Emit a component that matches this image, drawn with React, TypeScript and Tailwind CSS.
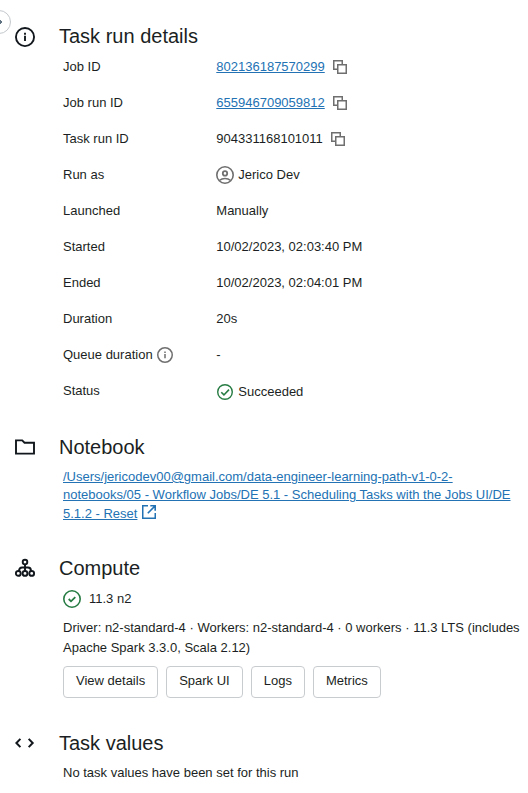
import type { ReactNode } from 'react';

function InfoIcon({ size, className = '' }: { size: number; className?: string }) {
  return (
    <svg width={size} height={size} viewBox="0 0 16 16" fill="none" className={`shrink-0 ${className}`}>
      <circle cx="8" cy="8" r="7.25" stroke="currentColor" strokeWidth="1.5" />
      <path d="M8 7v4.2M8 4.6v1.5" stroke="currentColor" strokeWidth="1.5" />
    </svg>
  );
}

function CopyIcon() {
  return (
    <svg width="14" height="14" viewBox="0 0 14 14" fill="none" className="shrink-0 text-[#6f6f6f]">
      <path d="M4 9.25H.75V.75h8.5V4" stroke="currentColor" strokeWidth="1.5" />
      <path d="M4.75 4.75h8.5v8.5h-8.5z" stroke="currentColor" strokeWidth="1.5" />
    </svg>
  );
}

function UserIcon() {
  return (
    <svg width="18" height="18" viewBox="0 0 18 18" fill="none" stroke="currentColor" strokeWidth="1.6" className="shrink-0 text-[#6f6f6f]">
      <circle cx="9" cy="9" r="8.2" />
      <circle cx="9" cy="7.4" r="2.2" strokeWidth="1.8" />
      <path d="M3.3 14.5c1.6-1.3 3.5-2 5.7-2s4.1.7 5.7 2" />
    </svg>
  );
}

function CheckIcon({ size, mark }: { size: number; mark: string }) {
  return (
    <svg width={size} height={size} viewBox="0 0 18 18" fill="none" stroke="currentColor" strokeWidth="1.6" className="shrink-0 text-[#277c43]">
      <circle cx="9" cy="9" r="8.2" />
      <path d={mark} strokeWidth="1.8" />
    </svg>
  );
}

function FolderIcon() {
  return (
    <svg width="20" height="20" viewBox="0 0 20 20" fill="none" className="text-[#11171c]">
      <path d="M1 3.4h6.2l2.3 2.3H19v10.9H1z" stroke="currentColor" strokeWidth="1.9" />
    </svg>
  );
}

function ClusterIcon() {
  return (
    <svg width="20" height="20" viewBox="0 0 20 20" fill="none" stroke="currentColor" strokeWidth="1.9" className="text-[#11171c]">
      <circle cx="10" cy="4.1" r="2.3" />
      <circle cx="3.3" cy="15.4" r="2.4" />
      <circle cx="10" cy="15.4" r="2.4" />
      <circle cx="16.7" cy="15.4" r="2.4" />
      <path d="M10 6.4V13M4 13c0-2.2 1.1-3.5 3-3.5h6c1.9 0 3 1.3 3 3.5" />
    </svg>
  );
}

function CodeIcon() {
  return (
    <svg width="20" height="20" viewBox="0 0 20 20" fill="none" stroke="currentColor" strokeWidth="2" className="text-[#11171c]">
      <path d="M5.4 5.9L1.4 10l4 4.1M13.7 5.9l4 4.1-4 4.1" />
    </svg>
  );
}

function ExternalIcon() {
  return (
    <svg width="14" height="14" viewBox="0 0 14 14" fill="none" stroke="currentColor" strokeWidth="1.5" className="ml-[5px] mt-[0.5px] inline-block align-[-1px]">
      <path d="M6 .75H.75v12.5h12.5V8" />
      <path d="M8.3.8h4.9v4.9M13.2.8L5.8 8.2" strokeWidth="1.6" />
    </svg>
  );
}

function Section({ icon, title, className, children }: { icon: ReactNode; title: string; className?: string; children: ReactNode }) {
  return (
    <section className={`flex ${className ?? ''}`}>
      <div className="flex h-7 w-[44px] shrink-0 items-center">{icon}</div>
      <div className="min-w-0 flex-1">
        <h2 className="text-[20px] leading-7">{title}</h2>
        <div className="pl-1">{children}</div>
      </div>
    </section>
  );
}

function Row({ label, children }: { label: ReactNode; children: ReactNode }) {
  return (
    <div className="flex h-9 items-center">
      <dt className="flex w-[153.3px] shrink-0 items-center gap-1">{label}</dt>
      <dd className="flex items-center">{children}</dd>
    </div>
  );
}

const link = 'text-[#2272b4] underline underline-offset-1';

export default function App() {
  return (
    <main className="relative h-[793px] w-[528px] overflow-hidden whitespace-nowrap bg-white pl-[15px] pt-[22px] font-['Liberation_Sans',Arial,sans-serif] text-[13px] leading-5 text-[#1b1f23]">
      <button className="absolute -left-[14px] top-[10px] flex h-6 w-[25px] items-center justify-center rounded-full border border-[#c4c8cc] text-[#5f7281]">
        <svg width="10" height="10" viewBox="0 0 10 10" className="ml-[3px]">
          <path d="M0 3.8h3.8V1.8L7 5 3.8 8.2V6.2H0z" fill="currentColor" stroke="currentColor" strokeWidth="1" />
        </svg>
      </button>

      <Section icon={<InfoIcon size={20} className="mt-[2px] text-[#11171c]" />} title="Task run details">
        <dl className="-mt-px">
          <Row label="Job ID">
            <a className={link}>802136187570299</a>
            <span className="ml-2"><CopyIcon /></span>
          </Row>
          <Row label="Job run ID">
            <a className={link}>655946709059812</a>
            <span className="ml-2"><CopyIcon /></span>
          </Row>
          <Row label="Task run ID">
            904331168101011
            <span className="ml-2"><CopyIcon /></span>
          </Row>
          <Row label="Run as">
            <UserIcon />
            <span className="ml-1">Jerico Dev</span>
          </Row>
          <Row label="Launched">Manually</Row>
          <Row label="Started">10/02/2023, 02:03:40 PM</Row>
          <Row label="Ended">10/02/2023, 02:04:01 PM</Row>
          <Row label="Duration">20s</Row>
          <Row label={<>Queue duration <InfoIcon size={16} className="text-[#6f6f6f]" /></>}>-</Row>
          <Row label="Status">
            <span className="ml-px mt-[2px] flex items-center gap-[5px]">
              <CheckIcon size={16} mark="M4.8 9.3l3 3 5.7-6" />
              Succeeded
            </span>
          </Row>
        </dl>
      </Section>

      <Section className="mt-6" icon={<FolderIcon />} title="Notebook">
        <p className="mt-[7px] h-[55px] leading-[18px]">
          <a className={link}>
            /Users/jericodev00@gmail.com/data-engineer-learning-path-v1-0-2-<br />
            notebooks/05 - Workflow Jobs/DE 5.1 - Scheduling Tasks with the Jobs UI/DE<br />
            5.1.2 - Reset
          </a>
          <span className="text-[#2272b4]"><ExternalIcon /></span>
        </p>
      </Section>

      <Section className="mt-[31px]" icon={<ClusterIcon />} title="Compute">
        <div className="mt-[7px] flex items-center gap-2">
          <CheckIcon size={18} mark="M5.7 9L8 11.3l4.3-4.2" />
          11.3 n2
        </div>
        <p className="mt-[9px]">
          Driver: n2-standard-4 · Workers: n2-standard-4 · 0 workers · 11.3 LTS (includes<br />
          Apache Spark 3.3.0, Scala 2.12)
        </p>
        <div className="mt-2 flex gap-2">
          {['View details', 'Spark UI', 'Logs', 'Metrics'].map((name) => (
            <button key={name} className="h-8 rounded border border-[#c9cccf] px-3 pb-[2px]">{name}</button>
          ))}
        </div>
      </Section>

      <Section className="mt-[31px]" icon={<CodeIcon />} title="Task values">
        <p className="mt-[6px]">No task values have been set for this run</p>
      </Section>
    </main>
  );
}
